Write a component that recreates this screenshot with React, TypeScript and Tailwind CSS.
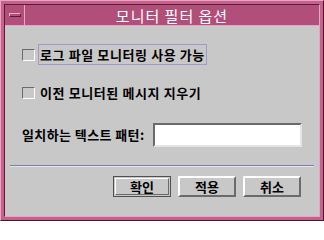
import { useState } from 'react';

const font = { fontFamily: '"Noto Sans CJK KR", "Noto Sans", sans-serif' };

function CheckBox({ checked, onToggle }: { checked: boolean; onToggle: () => void }) {
  return (
    <button
      onClick={onToggle}
      className="w-[13px] h-[12px] shrink-0 border border-t-[#6b6b6b] border-l-[#6b6b6b] border-r-white border-b-white bg-[#c8c8c8]"
    >
      {checked && <div className="w-full h-full bg-[#6b6b6b]" />}
    </button>
  );
}

function Button({ label, isDefault }: { label: string; isDefault?: boolean }) {
  if (isDefault) {
    return (
      <div className="w-[58px] h-[21px] border border-[#505050] p-[1px]">
        <button className="w-full h-full flex items-center justify-center border border-t-white border-l-white border-r-[#6b6b6b] border-b-[#6b6b6b] text-[13px] font-bold text-black">
          {label}
        </button>
      </div>
    );
  }
  return (
    <button className="w-[58px] h-[21px] flex items-center justify-center border-2 border-t-white border-l-white border-r-[#6b6b6b] border-b-[#6b6b6b] text-[13px] font-bold text-black">
      {label}
    </button>
  );
}

export default function App() {
  const [enableLog, setEnableLog] = useState(false);
  const [clearOld, setClearOld] = useState(false);
  const [pattern, setPattern] = useState('');

  return (
    <div
      style={font}
      className="w-[324px] h-[221px] flex flex-col bg-[#c4628c] border border-t-[#e8a4c4] border-l-[#e8a4c4] border-r-[#4e1530] border-b-[#4e1530] p-[3px]"
    >
      <div className="flex-1 flex flex-col border border-t-[#5a1a3a] border-l-[#5a1a3a] border-r-[#e8a4c4] border-b-[#e8a4c4]">
        {/* Title bar */}
        <div className="h-[21px] flex bg-[#b24e7a] border-b border-[#e8a4c4]">
          <div className="w-[20px] h-[20px] flex items-center justify-center border-r border-[#e8a4c4]">
            <div className="w-[12px] h-[4px] border border-t-[#eab0cc] border-l-[#eab0cc] border-r-[#5a1a3a] border-b-[#5a1a3a]" />
          </div>
          <div className="flex-1 flex items-center justify-center text-white text-[15px] leading-none tracking-[1px]">
            모니터 필터 옵션
          </div>
        </div>

        {/* Content */}
        <div className="flex-1 flex flex-col bg-[#c8c8c8] pt-[18px]">
          <div className="flex items-center pl-[17px] h-[21px]">
            <CheckBox checked={enableLog} onToggle={() => setEnableLog(!enableLog)} />
            <div className="ml-[3px] h-[21px] flex items-center border border-[#9c9ccc] px-[1px] text-[13px] tracking-[0.6px] font-bold text-black">
              로그 파일 모니터링 사용 가능
            </div>
          </div>

          <div className="flex items-center pl-[17px] h-[21px] mt-[17px]">
            <CheckBox checked={clearOld} onToggle={() => setClearOld(!clearOld)} />
            <div className="ml-[4px] px-[1px] text-[13px] tracking-[0.6px] font-bold text-black">
              이전 모니터된 메시지 지우기
            </div>
          </div>

          <div className="flex items-center pl-[17px] pr-[17px] mt-[20px]">
            <span className="text-[13px] tracking-[0.4px] font-bold text-black">일치하는 텍스트 패턴:</span>
            <input
              value={pattern}
              onChange={(e) => setPattern(e.target.value)}
              className="ml-auto w-[149px] h-[24px] bg-white outline-none border-2 border-t-[#6b6b6b] border-l-[#6b6b6b] border-r-[#e4e4e4] border-b-[#e4e4e4] px-1 text-[12px]"
            />
          </div>

          <div className="mx-[5px] mt-[18px] border-t border-b border-t-[#7c7cae] border-b-[#e6e6e6]" />

          <div className="flex justify-end gap-[7px] pr-[18px] mt-[9px]">
            <Button label="확인" isDefault />
            <Button label="적용" />
            <Button label="취소" />
          </div>
        </div>
      </div>
    </div>
  );
}
